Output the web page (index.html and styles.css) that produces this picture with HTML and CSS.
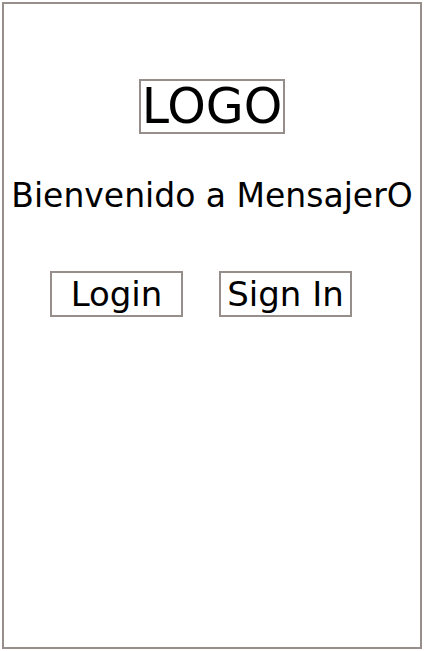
FILE: index.html
```html
<!DOCTYPE html>
<html lang="es">
<head>
    <meta charset="UTF-8">
    <meta name="viewport" content="width=device-width, initial-scale=1.0">
    <title>MensajerO</title>
    <link rel="stylesheet" href="styles.css">
</head>
<body>
    <div class="phone">
        <div class="logo">LOGO</div>
        <h1 class="welcome">Bienvenido a MensajerO</h1>
        <div class="actions">
            <button class="btn">Login</button>
            <button class="btn">Sign In</button>
        </div>
    </div>
</body>
</html>
```

FILE: styles.css
```css
/* Reset */
html, body {
    margin: 0;
    padding: 0;
    background: #ffffff;
}

body {
    font-family: "DejaVu Sans", Verdana, sans-serif;
    color: #000000;
}

/* Phone frame */
.phone {
    box-sizing: border-box;
    width: 420px;
    height: 647px;
    margin: 2px;
    border: 2px solid #958e8a;
    display: flex;
    flex-direction: column;
    align-items: center;
}

/* Logo placeholder */
.logo {
    margin-top: 75px;
    border: 2px solid #958e8a;
    font-size: 49px;
    line-height: 51px;
    padding: 0 1px;
}

/* Welcome line */
.welcome {
    margin: 42px 0 0;
    font-size: 33px;
    font-weight: normal;
    white-space: nowrap;
    line-height: normal;
}

/* Buttons */
.actions {
    align-self: stretch;
    display: flex;
    gap: 36px;
    padding-left: 46px;
    margin-top: 56px;
}

.btn {
    box-sizing: border-box;
    width: 133px;
    height: 46px;
    padding: 0;
    border: 2px solid #958e8a;
    background: #ffffff;
    font-family: inherit;
    font-size: 34px;
    line-height: 42px;
    color: #000000;
}
```
